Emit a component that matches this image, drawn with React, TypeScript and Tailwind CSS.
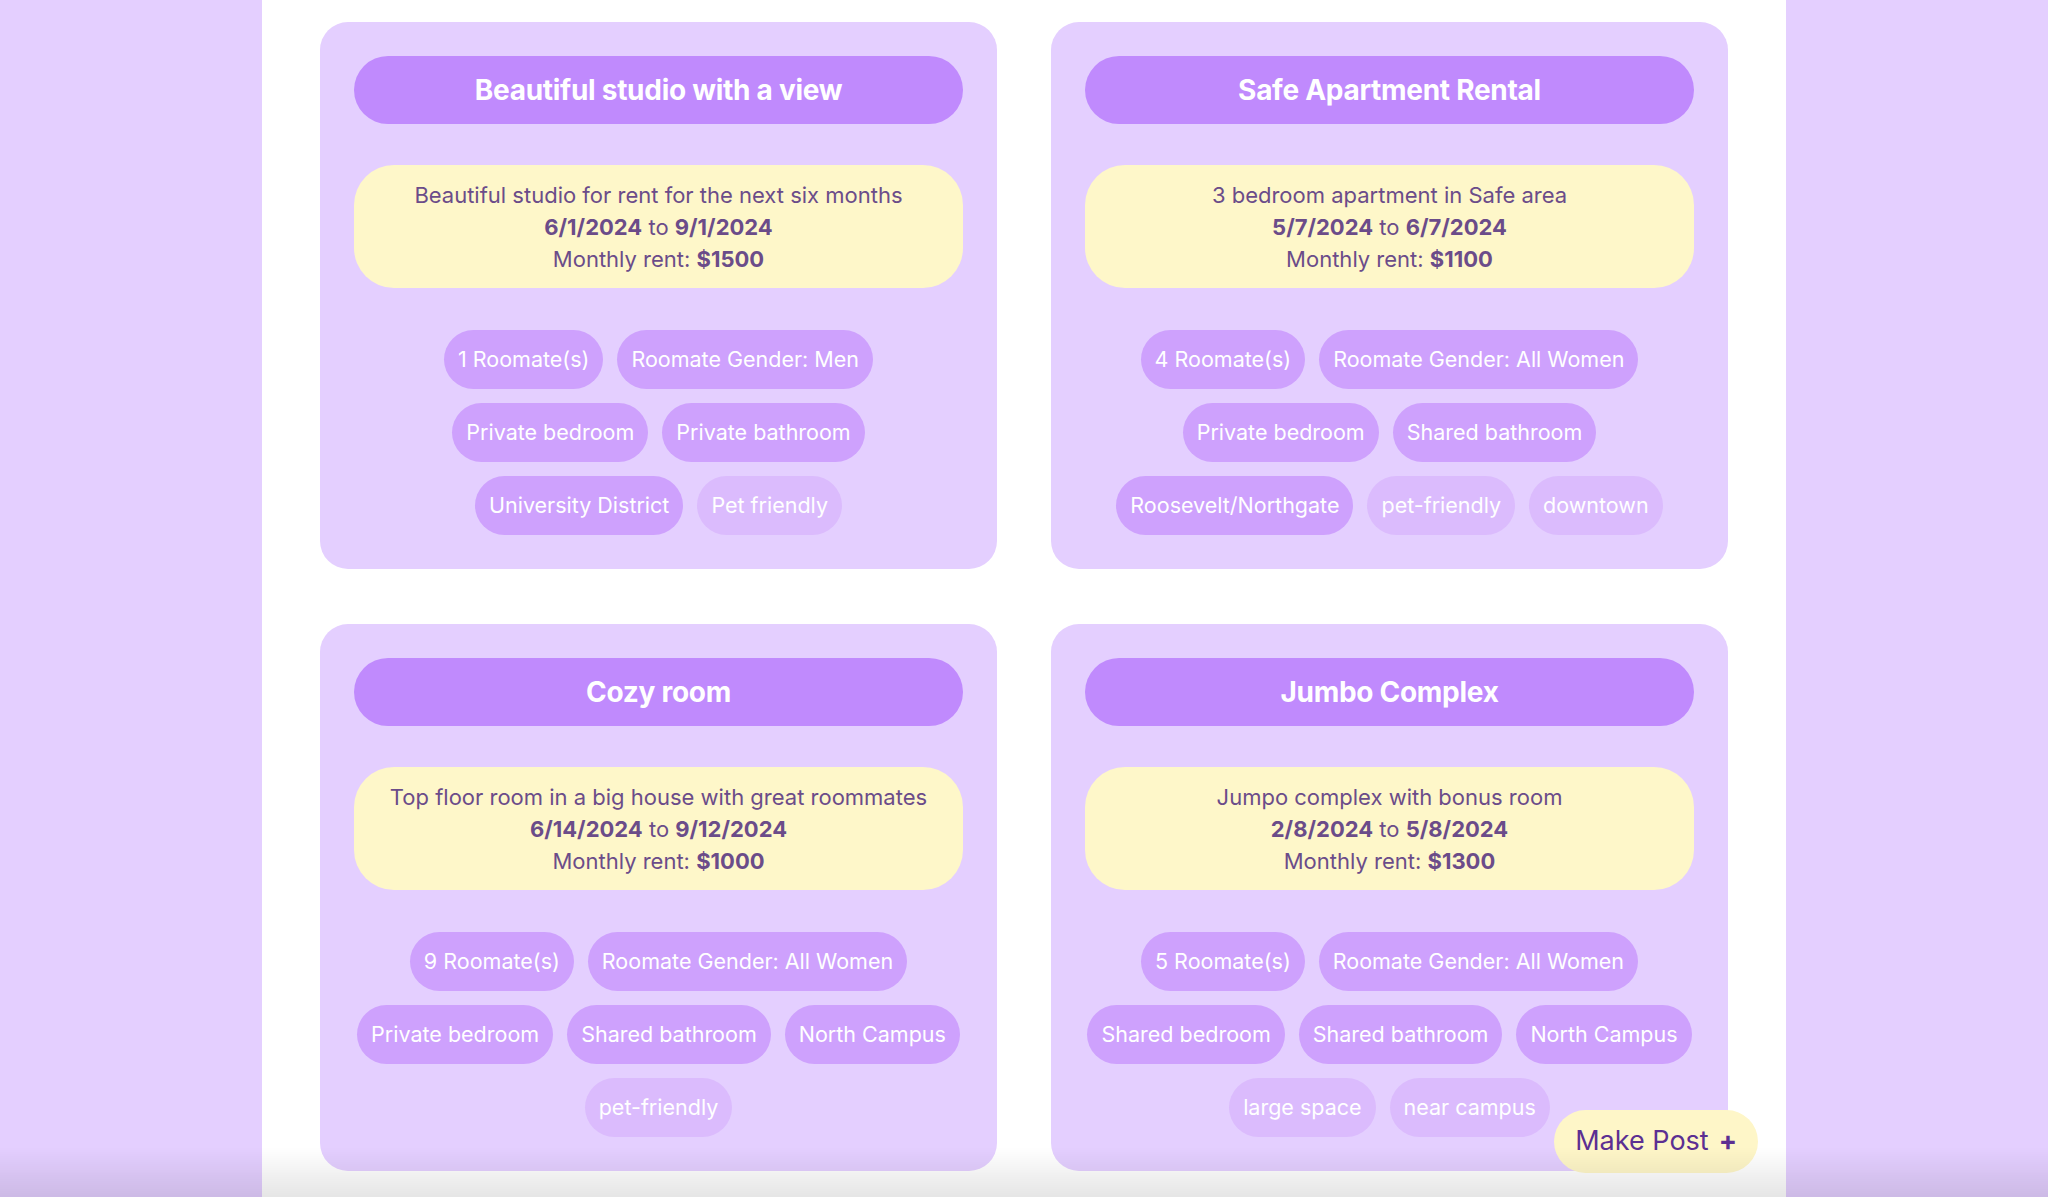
import React from "react";

interface Listing {
  title: string;
  description: string;
  start: string;
  end: string;
  rent: string;
  tags: string[];
  extras: string[];
}

const LISTINGS: Listing[] = [
  {
    title: "Beautiful studio with a view",
    description: "Beautiful studio for rent for the next six months",
    start: "6/1/2024",
    end: "9/1/2024",
    rent: "$1500",
    tags: ["1 Roomate(s)", "Roomate Gender: Men", "Private bedroom", "Private bathroom", "University District"],
    extras: ["Pet friendly"],
  },
  {
    title: "Safe Apartment Rental",
    description: "3 bedroom apartment in Safe area",
    start: "5/7/2024",
    end: "6/7/2024",
    rent: "$1100",
    tags: ["4 Roomate(s)", "Roomate Gender: All Women", "Private bedroom", "Shared bathroom", "Roosevelt/Northgate"],
    extras: ["pet-friendly", "downtown"],
  },
  {
    title: "Cozy room",
    description: "Top floor room in a big house with great roommates",
    start: "6/14/2024",
    end: "9/12/2024",
    rent: "$1000",
    tags: ["9 Roomate(s)", "Roomate Gender: All Women", "Private bedroom", "Shared bathroom", "North Campus"],
    extras: ["pet-friendly"],
  },
  {
    title: "Jumbo Complex",
    description: "Jumpo complex with bonus room",
    start: "2/8/2024",
    end: "5/8/2024",
    rent: "$1300",
    tags: ["5 Roomate(s)", "Roomate Gender: All Women", "Shared bedroom", "Shared bathroom", "North Campus"],
    extras: ["large space", "near campus"],
  },
];

function Tag({ label, light }: { label: string; light?: boolean }) {
  return (
    <span
      className={`flex h-[59px] items-center rounded-full px-[14px] text-[21.5px] text-white whitespace-nowrap ${
        light ? "bg-[#dbbbfd]" : "bg-[#cea1fd]"
      }`}
    >
      {label}
    </span>
  );
}

function ListingCard({ listing }: { listing: Listing }) {
  return (
    <div className="flex flex-col rounded-[28px] bg-[#e4cfff] p-[34px]">
      {/* Title */}
      <div className="flex h-[68px] items-center justify-center rounded-full bg-[#c08afd]">
        <h2 className="text-[28px] font-bold tracking-[-0.01em] text-white">{listing.title}</h2>
      </div>

      {/* Details */}
      <div className="mt-[41px] rounded-[40px] bg-[#fef7c9] pb-[13px] pt-[14px] text-center text-[22px] leading-[32px] text-[#6b4c89]">
        <p>{listing.description}</p>
        <p>
          <span className="font-bold">{listing.start}</span> to <span className="font-bold">{listing.end}</span>
        </p>
        <p>
          Monthly rent: <span className="font-bold">{listing.rent}</span>
        </p>
      </div>

      {/* Tags */}
      <div className="-mx-[8px] mt-[42px] flex flex-wrap justify-center gap-[14px]">
        {listing.tags.map((t) => (
          <Tag key={t} label={t} />
        ))}
        {listing.extras.map((t) => (
          <Tag key={t} label={t} light />
        ))}
      </div>
    </div>
  );
}

export default function App() {
  return (
    <div className="min-h-screen bg-[#e4cfff] font-['Inter',sans-serif]">
      <div className="mx-auto min-h-screen w-[1524px] bg-white px-[58px] pb-[28px] pt-[22px]">
        <div className="grid grid-cols-2 gap-x-[54px] gap-y-[55px]">
          {LISTINGS.map((l) => (
            <ListingCard key={l.title} listing={l} />
          ))}
        </div>
      </div>

      <button className="fixed bottom-[24px] right-[290px] flex h-[63px] items-center gap-[10px] rounded-full bg-[#fef6c8] px-[21px] text-[27px] text-[#5c2f92]">
        <span>Make Post</span>
        <span className="font-bold">+</span>
      </button>

      {/* bottom fade */}
      <div className="pointer-events-none fixed inset-x-0 bottom-0 h-[50px] bg-gradient-to-b from-transparent to-black/10" />
    </div>
  );
}
